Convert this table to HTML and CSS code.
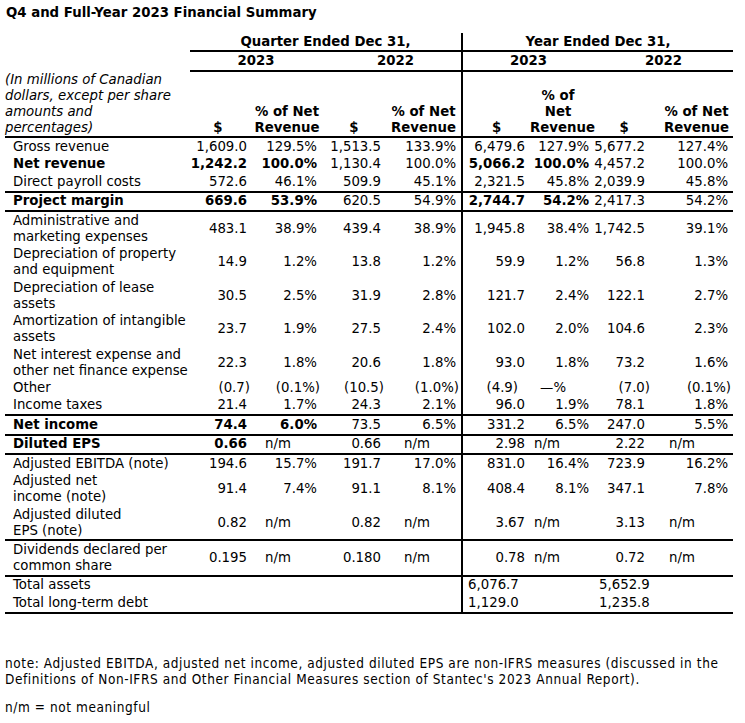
FILE: index.html
```html
<!DOCTYPE html>
<html>
<head>
<meta charset="utf-8">
<title>Q4 and Full-Year 2023 Financial Summary</title>
<link rel="stylesheet" href="styles.css">
</head>
<body>
<h1 class="title">Q4 and Full-Year 2023 Financial Summary</h1>
<table class="fin">
  <colgroup>
    <col class="c-label"><col class="c-qd"><col class="c-qp"><col class="c-q2d"><col class="c-q2p"><col class="c-yd"><col class="c-yp"><col class="c-y2d"><col class="c-y2p">
  </colgroup>
  <thead>
    <tr class="h1">
      <th></th>
      <th colspan="4" class="grp">Quarter Ended Dec 31,</th>
      <th colspan="4" class="grp ysep">Year Ended Dec 31,</th>
    </tr>
    <tr class="h2">
      <th></th>
      <th colspan="2" class="grp">2023</th>
      <th colspan="2" class="grp q22">2022</th>
      <th colspan="2" class="grp ysep">2023</th>
      <th colspan="2" class="grp">2022</th>
    </tr>
    <tr class="h3">
      <th class="hl">(In millions of Canadian<br>dollars, except per share<br>amounts and<br>percentages)</th>
      <th class="hd hqd">$</th>
      <th class="hd hqp">% of Net<br>Revenue</th>
      <th class="hd hq2d">$</th>
      <th class="hd hq2p">% of Net<br>Revenue</th>
      <th class="hd hyd ysep">$</th>
      <th class="hd hyp">% of<br>Net<br>Revenue</th>
      <th class="hd hy2d">$</th>
      <th class="hd hy2p">% of Net<br>Revenue</th>
    </tr>
  </thead>
  <tbody>
    <tr>
      <td class="lb">Gross revenue</td>
      <td>1,609.0</td><td>129.5%</td><td>1,513.5</td><td>133.9%</td>
      <td class="ysep">6,479.6</td><td>127.9%</td><td>5,677.2</td><td>127.4%</td>
    </tr>
    <tr>
      <td class="lb b">Net revenue</td>
      <td class="b">1,242.2</td><td class="b">100.0%</td><td>1,130.4</td><td>100.0%</td>
      <td class="ysep b">5,066.2</td><td class="b">100.0%</td><td>4,457.2</td><td>100.0%</td>
    </tr>
    <tr class="rule">
      <td class="lb">Direct payroll costs</td>
      <td>572.6</td><td>46.1%</td><td>509.9</td><td>45.1%</td>
      <td class="ysep">2,321.5</td><td>45.8%</td><td>2,039.9</td><td>45.8%</td>
    </tr>
    <tr class="rule">
      <td class="lb b">Project margin</td>
      <td class="b">669.6</td><td class="b">53.9%</td><td>620.5</td><td>54.9%</td>
      <td class="ysep b">2,744.7</td><td class="b">54.2%</td><td>2,417.3</td><td>54.2%</td>
    </tr>
    <tr>
      <td class="lb">Administrative and<br>marketing expenses</td>
      <td>483.1</td><td>38.9%</td><td>439.4</td><td>38.9%</td>
      <td class="ysep">1,945.8</td><td>38.4%</td><td>1,742.5</td><td>39.1%</td>
    </tr>
    <tr>
      <td class="lb">Depreciation of property<br>and equipment</td>
      <td>14.9</td><td>1.2%</td><td>13.8</td><td>1.2%</td>
      <td class="ysep">59.9</td><td>1.2%</td><td>56.8</td><td>1.3%</td>
    </tr>
    <tr>
      <td class="lb">Depreciation of lease<br>assets</td>
      <td>30.5</td><td>2.5%</td><td>31.9</td><td>2.8%</td>
      <td class="ysep">121.7</td><td>2.4%</td><td>122.1</td><td>2.7%</td>
    </tr>
    <tr>
      <td class="lb">Amortization of intangible<br>assets</td>
      <td>23.7</td><td>1.9%</td><td>27.5</td><td>2.4%</td>
      <td class="ysep">102.0</td><td>2.0%</td><td>104.6</td><td>2.3%</td>
    </tr>
    <tr>
      <td class="lb">Net interest expense and<br>other net finance expense</td>
      <td>22.3</td><td>1.8%</td><td>20.6</td><td>1.8%</td>
      <td class="ysep">93.0</td><td>1.8%</td><td>73.2</td><td>1.6%</td>
    </tr>
    <tr>
      <td class="lb">Other</td>
      <td class="neg">(0.7)</td><td class="neg">(0.1%)</td><td class="neg">(10.5)</td><td class="neg">(1.0%)</td>
      <td class="ysep neg-in">(4.9)</td><td class="dash">—%</td><td class="neg-out">(7.0)</td><td class="neg">(0.1%)</td>
    </tr>
    <tr class="rule">
      <td class="lb">Income taxes</td>
      <td>21.4</td><td>1.7%</td><td>24.3</td><td>2.1%</td>
      <td class="ysep">96.0</td><td>1.9%</td><td>78.1</td><td>1.8%</td>
    </tr>
    <tr class="rule">
      <td class="lb b">Net income</td>
      <td class="b">74.4</td><td class="b">6.0%</td><td>73.5</td><td>6.5%</td>
      <td class="ysep">331.2</td><td>6.5%</td><td>247.0</td><td>5.5%</td>
    </tr>
    <tr class="rule">
      <td class="lb b">Diluted EPS</td>
      <td class="b">0.66</td><td class="nm nm1">n/m</td><td>0.66</td><td class="nm nm2">n/m</td>
      <td class="ysep">2.98</td><td class="nm nm3">n/m</td><td>2.22</td><td class="nm nm4">n/m</td>
    </tr>
    <tr>
      <td class="lb">Adjusted EBITDA (note)</td>
      <td>194.6</td><td>15.7%</td><td>191.7</td><td>17.0%</td>
      <td class="ysep">831.0</td><td>16.4%</td><td>723.9</td><td>16.2%</td>
    </tr>
    <tr>
      <td class="lb">Adjusted net<br>income (note)</td>
      <td>91.4</td><td>7.4%</td><td>91.1</td><td>8.1%</td>
      <td class="ysep">408.4</td><td>8.1%</td><td>347.1</td><td>7.8%</td>
    </tr>
    <tr class="rule">
      <td class="lb">Adjusted diluted<br>EPS (note)</td>
      <td>0.82</td><td class="nm nm1">n/m</td><td>0.82</td><td class="nm nm2">n/m</td>
      <td class="ysep">3.67</td><td class="nm nm3">n/m</td><td>3.13</td><td class="nm nm4">n/m</td>
    </tr>
    <tr class="rule">
      <td class="lb">Dividends declared per<br>common share</td>
      <td>0.195</td><td class="nm nm1">n/m</td><td>0.180</td><td class="nm nm2">n/m</td>
      <td class="ysep">0.78</td><td class="nm nm3">n/m</td><td>0.72</td><td class="nm nm4">n/m</td>
    </tr>
    <tr>
      <td class="lb">Total assets</td>
      <td></td><td></td><td></td><td></td>
      <td class="ysep lft">6,076.7</td><td></td><td class="lft">5,652.9</td><td></td>
    </tr>
    <tr class="rule">
      <td class="lb">Total long-term debt</td>
      <td></td><td></td><td></td><td></td>
      <td class="ysep lft">1,129.0</td><td></td><td class="lft">1,235.8</td><td></td>
    </tr>
  </tbody>
</table>
<div class="notes">
  <p class="note">note: Adjusted EBITDA, adjusted net income, adjusted diluted EPS are non-IFRS measures (discussed in the Definitions of Non-IFRS and Other Financial Measures section of Stantec's 2023 Annual Report).</p>
  <p class="note">n/m = not meaningful</p>
</div>
</body>
</html>
```
FILE: styles.css
```css
html, body {
  margin: 0;
  padding: 0;
  background: #ffffff;
  color: #000000;
}

body {
  padding: 5px 5px;
  font-family: "DejaVu Sans", Verdana, sans-serif;
  font-size: 13.3px;
}

.title {
  font-size: 13.3px;
  font-weight: bold;
  line-height: 16px;
  margin: 0 0 12px 1px;
}

.fin {
  border-collapse: collapse;
  table-layout: fixed;
  width: 728px;
  font-size: 13.3px;
  line-height: 16px;
}

.c-label { width: 185px; }
.c-qd { width: 62px; }
.c-qp { width: 70px; }
.c-q2d { width: 64px; }
.c-q2p { width: 76px; }
.c-yd { width: 68px; }
.c-yp { width: 64px; }
.c-y2d { width: 56px; }
.c-y2p { width: 83px; }

.fin th, .fin td {
  padding: 0.72px 5px 0.72px 0;
  vertical-align: middle;
}

.fin th {
  font-weight: bold;
}

.fin td {
  text-align: right;
  white-space: nowrap;
}

.grp {
  text-align: center;
  border-bottom: 2px solid #000;
  padding-right: 0 !important;
}

.q22 {
  padding-left: 8px !important;
}

.ysep {
  border-left: 2px solid #000;
}

.h3 th {
  border-bottom: 2px solid #000;
  vertical-align: bottom;
}

.hl {
  font-style: italic;
  font-weight: normal !important;
  text-align: left;
  white-space: nowrap;
}

.hd {
  text-align: center;
  padding-right: 0 !important;
}

.hqd { padding-right: 6px !important; }
.hyp { padding-right: 8px !important; }
.hy2d { padding-left: 4px !important; }
.hy2p { padding-left: 10px !important; }

.fin td.lb {
  text-align: left;
  padding-left: 8px;
  padding-right: 0;
}

.b {
  font-weight: bold;
}

.rule td {
  border-bottom: 2px solid #000;
}

.fin td.neg {
  padding-right: 2px;
}

.fin td.neg-in {
  padding-right: 12px;
}

.fin td.neg-out {
  padding-right: 0;
}

.fin td.dash {
  padding-right: 28px;
}

.fin td.nm {
  text-align: left;
}

.fin td.nm1 { padding-left: 13px; }
.fin td.nm2 { padding-left: 18px; }
.fin td.nm3 { padding-left: 4px; }
.fin td.nm4 { padding-left: 19px; }

.fin td.lft {
  text-align: left;
  padding-left: 5px;
}

.notes {
  margin-top: 41px;
  font-family: "DejaVu Sans Condensed", "DejaVu Sans", sans-serif;
  font-stretch: condensed;
  font-size: 13.5px;
  letter-spacing: 0.58px;
  line-height: 16px;
}

.note {
  margin: 0 0 12px 0;
}
```
